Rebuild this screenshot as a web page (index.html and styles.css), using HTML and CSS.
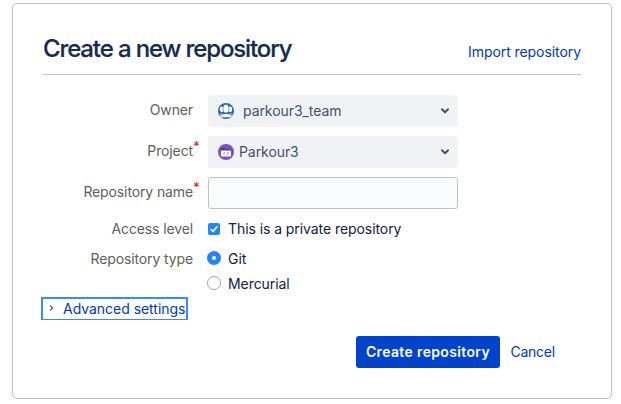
FILE: index.html
```html
<!DOCTYPE html>
<html lang="en">
<head>
<meta charset="utf-8">
<title>Create a new repository</title>
<link rel="stylesheet" href="styles.css">
</head>
<body>
<main class="card">
  <header class="header">
    <h1 class="title">Create a new repository</h1>
    <a class="link import">Import repository</a>
  </header>
  <form class="form">
    <div class="row field">
      <span class="label">Owner</span>
      <div class="select owner">
        <svg class="avatar" width="16" height="16" viewBox="0 0 16 16">
          <circle cx="8" cy="8" r="8" fill="#2866ad"/>
          <g fill="#fff">
            <ellipse cx="3.800" cy="6.300" rx="2" ry="2.800"/>
            <ellipse cx="12.200" cy="6.300" rx="2" ry="2.800"/>
            <ellipse cx="8" cy="5.700" rx="3" ry="4.200" stroke="#2866ad" stroke-width=".6"/>
            <path d="M1 10.500l2.200-.7 2.200 1.400h5.200l2.200-1.400 2.200.7-1 2.200H2z" opacity=".35"/>
            <path d="M2.200 13.300c.8-1.300 2.200-1.800 3.800-2.300h4c1.600.5 3 1 3.800 2.300l-.9 1H3.100z"/>
          </g>
        </svg>
        <span class="value">parkour3_team</span>
        <svg class="chevron" width="8" height="6" viewBox="0 0 8 6"><path d="M1 1.300l3 2.900 3-2.900"/></svg>
      </div>
    </div>
    <div class="row field">
      <span class="label">Project<sup class="required">*</sup></span>
      <div class="select project">
        <svg class="avatar" width="16" height="16" viewBox="0 0 16 16">
          <circle cx="8" cy="8" r="8" fill="#7e4fc3"/>
          <path d="M3 4h4l1 1h5v2H3z" fill="#513b8c"/>
          <rect x="3" y="6.500" width="10" height="6" rx=".6" fill="#fff"/>
          <path d="M6.800 8.200L5.600 9.400l1.200 1.200M9.200 8.200l1.200 1.200-1.200 1.200" fill="none" stroke="#57477f" stroke-width=".8"/>
        </svg>
        <span class="value">Parkour3</span>
        <svg class="chevron" width="8" height="6" viewBox="0 0 8 6"><path d="M1 1.300l3 2.900 3-2.900"/></svg>
      </div>
    </div>
    <div class="row field">
      <span class="label" id="name">Repository name<sup class="required">*</sup></span>
      <input class="input" type="text" aria-labelledby="name">
    </div>
    <div class="row access">
      <span class="label">Access level</span>
      <label class="option">
        <svg class="control" width="14" height="14" viewBox="0 0 14 14"><rect x="1" y="1" width="12" height="12" rx="2" fill="#2684ff"/><path d="M4 7.500l2 2 4-5" fill="none" stroke="#fff" stroke-width="1.600" stroke-linecap="round" stroke-linejoin="round"/></svg>
        <span class="text">This is a private repository</span>
      </label>
    </div>
    <div class="row type">
      <span class="label">Repository type</span>
      <label class="option">
        <svg class="control" width="14" height="14" viewBox="0 0 14 14"><circle cx="7" cy="7" r="7" fill="#2684ff"/><circle cx="7" cy="7" r="2" fill="#fff"/></svg>
        <span class="text">Git</span>
      </label>
    </div>
    <div class="row mercurial">
      <span class="label"></span>
      <label class="option">
        <svg class="control" width="14" height="14" viewBox="0 0 14 14"><circle cx="7" cy="7" r="6.500" fill="#fff" stroke="#a6a6a6"/></svg>
        <span class="text">Mercurial</span>
      </label>
    </div>
    <a class="advanced">
      <svg class="caret" width="5" height="6" viewBox="0 0 5 6"><path d="M1 .4l2.600 2.600L1 5.600"/></svg>
      <span class="link">Advanced settings</span>
    </a>
    <div class="actions">
      <button class="button" type="button">Create repository</button>
      <a class="link cancel">Cancel</a>
    </div>
  </form>
</main>
</body>
</html>
```
FILE: styles.css
```css
* {
  box-sizing: border-box;
}

body {
  margin: 0;
  background: #fff;
  color: #172b4d;
  font: 14px/20px Inter, "Liberation Sans", sans-serif;
  letter-spacing: -0.07px;
}

.card {
  width: 600px;
  height: 396px;
  margin: 3px 0 0 12px;
  padding: 0 30px;
  border: 1px solid #c1c1c1;
  border-radius: 5px;
}

.header {
  display: flex;
  justify-content: space-between;
  height: 71px;
  border-bottom: 1px solid #c1c1c1;
}

.title {
  margin: 30px 0 0;
  font-size: 24px;
  font-weight: 500;
  line-height: 30px;
  letter-spacing: -1.13px;
  white-space: nowrap;
  -webkit-text-stroke: 0.2px #172b4d;
}

.link {
  color: #0039b8;
  white-space: nowrap;
}

.import {
  margin-top: 38px;
}

.form {
  padding-top: 20px;
}

.row {
  display: grid;
  grid-template-columns: 150px 250px;
  column-gap: 15px;
}

.field {
  height: 32px;
  margin-bottom: 9px;
}

.label {
  position: relative;
  height: 20px;
  color: #5e5e5e;
  letter-spacing: -0.12px;
  text-align: right;
  white-space: nowrap;
}

.field .label {
  margin-top: 5px;
}

.required {
  position: absolute;
  top: -5px;
  left: 100%;
  color: #d62d20;
  font-size: 13px;
  font-weight: 500;
  line-height: 20px;
}

.select {
  display: flex;
  align-items: center;
  height: 32px;
  padding: 0 9px 0 10px;
  border-radius: 3px;
  background: #f1f2f6;
  color: #42526e;
}

.avatar {
  flex: none;
  margin-top: -1px;
}

.value {
  margin-left: 5px;
}

.owner .value {
  margin-left: 9px;
}

.chevron {
  margin: -1px 0 0 auto;
  fill: none;
  stroke: #42526e;
  stroke-width: 2;
  stroke-linecap: round;
  stroke-linejoin: round;
}

.input {
  width: 250px;
  height: 32px;
  padding: 0 8px;
  border: 1px solid #c1c1c1;
  border-radius: 3px;
  background: #fafbfc;
}

.access {
  height: 30px;
  padding-top: 1px;
}

.type {
  height: 25px;
}

.type .label {
  padding-top: 1px;
}

.mercurial {
  height: 28px;
}

.option {
  display: flex;
  align-items: center;
  gap: 7px;
  height: 20px;
  margin-left: -1px;
  color: #10213f;
  white-space: nowrap;
}

.type .text,
.mercurial .text {
  padding-top: 2px;
}

.advanced {
  display: flex;
  align-items: center;
  gap: 9px;
  width: 147px;
  height: 23px;
  margin: -4px 0 0 -2px;
  padding-left: 6px;
  border: 2px solid #388bff;
  border-bottom-width: 1px;
}

.advanced .link {
  padding-bottom: 1px;
  letter-spacing: -0.03px;
}

.caret {
  margin-top: -3px;
  fill: none;
  stroke: #42526e;
  stroke-width: 1.200;
}

.actions {
  display: flex;
  align-items: center;
  gap: 10.5px;
  margin: 16px 0 0 313px;
}

.cancel {
  letter-spacing: -0.25px;
}

.button {
  width: 144px;
  height: 32px;
  padding: 0;
  border: 0;
  border-radius: 3px;
  background: #0044cc;
  color: #fff;
  font: 600 14px/20px Inter, "Liberation Sans", sans-serif;
  letter-spacing: 0.35px;
  white-space: nowrap;
}
```
